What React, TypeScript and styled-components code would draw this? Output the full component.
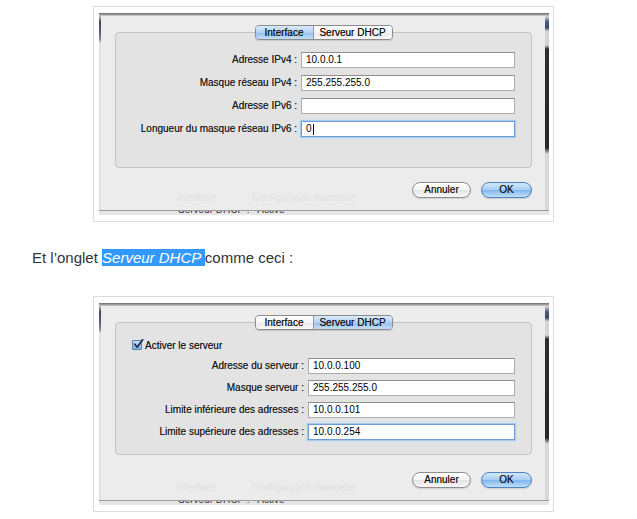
import React from "react";
import styled, { createGlobalStyle, css } from "styled-components";

const Global = createGlobalStyle`
  html, body { margin: 0; padding: 0; background: #fff; }
  body { font-family: "Liberation Sans", Arial, sans-serif; }
`;

const Page = styled.div`
  width: 637px;
  height: 519px;
  overflow: hidden;
  padding-top: 6px;
  box-sizing: border-box;
`;

const Figure = styled.div`
  margin-left: 93px;
  width: 461px;
  box-sizing: border-box;
  border: 1px solid #dcdcdc;
  padding: 6px 4px 6px 5px;
`;

const Shot = styled.div`
  height: 202px;
  width: 450px;
  display: flex;
  flex-direction: column;
  background: #e9e9e9;
  overflow: hidden;
`;

const TopEdge = styled.div`
  flex: none;
  height: 3px;
  background: linear-gradient(#6a6a6a, #9d9d9d 55%, #d4d4d4);
`;

const Middle = styled.div`
  flex: 1;
  display: flex;
  min-height: 0;
`;

const LeftEdge = styled.div`
  flex: none;
  width: 2px;
  background: linear-gradient(#b9c0cc 0%, #3c475c 3%, #5a6680 9%, #7d879a 12%, #e2e2e2 14%, #e2e2e2 100%);
`;

const RightEdge = styled.div`
  flex: none;
  width: 4px;
  background: linear-gradient(
    #dcdcdc 0%, #4d5d7c 3%, #3b4a66 6%, #d6d6d6 8%, #d6d6d6 15%,
    #2e2e2e 17%, #262626 68%, #d9d9d9 71%, #d9d9d9 100%
  );
`;

const Sheet = styled.div`
  flex: 1;
  display: flex;
  flex-direction: column;
  background: #ececec;
  min-width: 0;
`;

const BottomEdge = styled.div`
  flex: none;
  height: 5px;
  box-sizing: border-box;
  border-top: 1px solid #9c9c9c;
  background: #e6e6e6;
  overflow: hidden;
  padding-left: 79px;
`;

const CutText = styled.div`
  margin-top: -6px;
  font-size: 10px;
  line-height: 10px;
  color: #333;
  white-space: pre;
`;

const GroupBox = styled.div<{ $h: number }>`
  margin: 16px 13px 0 14px;
  height: ${(p) => p.$h}px;
  box-sizing: border-box;
  border: 1px solid #c3c3c3;
  border-radius: 4px;
  background: #e3e3e3;
  display: flex;
  flex-direction: column;
`;

const Tabs = styled.div`
  align-self: center;
  margin-top: -8px;
  display: flex;
  height: 15px;
  box-sizing: border-box;
  border: 1px solid #8b8b8b;
  border-radius: 4px;
  overflow: hidden;
  box-shadow: 0 1px 1px rgba(0, 0, 0, 0.12);
`;

const Tab = styled.div<{ $active?: boolean; $w: number }>`
  width: ${(p) => p.$w}px;
  text-align: center;
  font-size: 10px;
  line-height: 13px;
  color: #111;
  text-shadow: 0 0 0.4px rgba(0, 0, 0, 0.6);
  background: linear-gradient(#ffffff, #f4f4f4 50%, #e9e9e9 51%, #f7f7f7);
  ${(p) =>
    p.$active &&
    css`
      background: linear-gradient(#d9e9fb, #b3d2f3 50%, #93bfee 51%, #c4def8);
    `}
  & + & {
    border-left: 1px solid #9a9a9a;
  }
`;

const CheckRow = styled.label`
  display: flex;
  align-items: center;
  gap: 3px;
  margin-top: 9px;
  padding-left: 16px;
  height: 12px;
  font-size: 10px;
  color: #111;
  text-shadow: 0 0 0.4px rgba(0, 0, 0, 0.5);
`;

const CheckBox = styled.span`
  display: inline-flex;
  width: 10px;
  height: 10px;
  box-sizing: border-box;
  border: 1px solid #5b7fae;
  border-radius: 1px;
  background: linear-gradient(#c4dcf6, #82b2e6);
  position: relative;
`;

const Form = styled.div<{ $top: number; $gap: number; $inputW: number }>`
  margin-top: ${(p) => p.$top}px;
  display: grid;
  grid-template-columns: 1fr ${(p) => p.$inputW}px;
  column-gap: 4px;
  row-gap: ${(p) => p.$gap}px;
  padding-right: 16px;
  align-items: center;
`;

const Label = styled.div`
  text-align: right;
  font-size: 10px;
  line-height: 12px;
  color: #161616;
  white-space: nowrap;
  text-shadow: 0 0 0.4px rgba(0, 0, 0, 0.5);
`;

const Field = styled.div<{ $focus?: boolean }>`
  height: 16px;
  box-sizing: border-box;
  border: 1px solid #acacac;
  border-top-color: #8e8e8e;
  background: #fff;
  font-size: 10px;
  line-height: 14px;
  color: #000;
  padding-left: 4px;
  display: flex;
  align-items: center;
  ${(p) =>
    p.$focus &&
    css`
      border-color: #6d9bd2;
      box-shadow: 0 0 0 1px #a9cbef, 0 0 2px 1px #c4dcf5;
    `}
`;

const Caret = styled.span`
  display: inline-block;
  width: 1px;
  height: 11px;
  background: #000;
  margin-left: 1px;
`;

const Footer = styled.div`
  margin-top: auto;
  margin-bottom: 12px;
  height: 16px;
  display: flex;
  align-items: flex-start;
  padding: 0 13px 0 76px;
`;

const Ghost = styled.div`
  display: flex;
  gap: 36px;
  margin-top: 11px;
  font-size: 10px;
  line-height: 10px;
  color: #e1e1e1;
  white-space: nowrap;
`;

const Buttons = styled.div`
  margin-left: auto;
  display: flex;
  gap: 10px;
`;

const Button = styled.div<{ $default?: boolean; $w: number }>`
  width: ${(p) => p.$w}px;
  height: 16px;
  box-sizing: border-box;
  border-radius: 8px;
  border: 1px solid #8d8d8d;
  font-size: 10px;
  line-height: 14px;
  text-align: center;
  color: #111;
  text-shadow: 0 0 0.4px rgba(0, 0, 0, 0.5);
  background: linear-gradient(#ffffff, #f3f3f3 50%, #e3e3e3 51%, #f8f8f8);
  box-shadow: 0 1px 1px rgba(0, 0, 0, 0.12);
  ${(p) =>
    p.$default &&
    css`
      border-color: #4f83c2;
      background: linear-gradient(#d3e7fc, #a6cdf4 50%, #7fb4ee 51%, #bfe0fc);
    `}
`;

const Para = styled.p`
  margin: 27px 0 29px 32px;
  font-family: "Liberation Sans", Arial, sans-serif;
  font-size: 15px;
  line-height: 18px;
  color: #333;
`;

const Highlight = styled.em`
  font-style: italic;
  background: #3399ff;
  color: #fff;
`;

type Row = { label: string; value: string; focus?: boolean };

type DialogProps = {
  active: "interface" | "dhcp";
  boxH: number;
  rows: Row[];
  inputW: number;
  formTop: number;
  gap: number;
  checkbox?: string;
};

const Check = () => (
  <svg width="11" height="11" viewBox="0 0 11 11" style={{ position: "absolute", left: 0, top: -2 }}>
    <path d="M1.8 5.2 L4.2 8.2 L9.6 0.8" fill="none" stroke="#1d2b48" strokeWidth="1.7" strokeLinecap="round" strokeLinejoin="round" />
  </svg>
);

function Dialog({ active, boxH, rows, inputW, formTop, gap, checkbox }: DialogProps) {
  return (
    <Figure>
      <Shot>
        <TopEdge />
        <Middle>
          <LeftEdge />
          <Sheet>
            <GroupBox $h={boxH}>
              <Tabs>
                <Tab $w={57} $active={active === "interface"}>Interface</Tab>
                <Tab $w={78} $active={active === "dhcp"}>Serveur DHCP</Tab>
              </Tabs>
              {checkbox && (
                <CheckRow>
                  <CheckBox>
                    <Check />
                  </CheckBox>
                  {checkbox}
                </CheckRow>
              )}
              <Form $top={formTop} $gap={gap} $inputW={inputW}>
                {rows.map((r) => (
                  <React.Fragment key={r.label}>
                    <Label>{r.label}</Label>
                    <Field $focus={r.focus}>
                      {r.value}
                      {r.focus && active === "interface" && <Caret />}
                    </Field>
                  </React.Fragment>
                ))}
              </Form>
            </GroupBox>
            <Footer>
              <Ghost>
                <span>Interface</span>
                <span>Configuration manuelle</span>
              </Ghost>
              <Buttons>
                <Button $w={59}>Annuler</Button>
                <Button $w={51} $default>
                  OK
                </Button>
              </Buttons>
            </Footer>
          </Sheet>
          <RightEdge />
        </Middle>
        <BottomEdge>
          <CutText>{"Serveur DHCP :   Active"}</CutText>
        </BottomEdge>
      </Shot>
    </Figure>
  );
}

export default function App() {
  return (
    <>
      <Global />
      <Page>
        <Dialog
          active="interface"
          boxH={136}
          inputW={214}
          formTop={12}
          gap={7}
          rows={[
            { label: "Adresse IPv4 :", value: "10.0.0.1" },
            { label: "Masque réseau IPv4 :", value: "255.255.255.0" },
            { label: "Adresse IPv6 :", value: "" },
            { label: "Longueur du masque réseau IPv6 :", value: "0", focus: true },
          ]}
        />
        <Para>
          Et l’onglet <Highlight>Serveur DHCP </Highlight>comme ceci :
        </Para>
        <Dialog
          active="dhcp"
          boxH={133}
          inputW={207}
          formTop={7}
          gap={6}
          checkbox="Activer le serveur"
          rows={[
            { label: "Adresse du serveur :", value: "10.0.0.100" },
            { label: "Masque serveur :", value: "255.255.255.0" },
            { label: "Limite inférieure des adresses :", value: "10.0.0.101" },
            { label: "Limite supérieure des adresses :", value: "10.0.0.254", focus: true },
          ]}
        />
      </Page>
    </>
  );
}
